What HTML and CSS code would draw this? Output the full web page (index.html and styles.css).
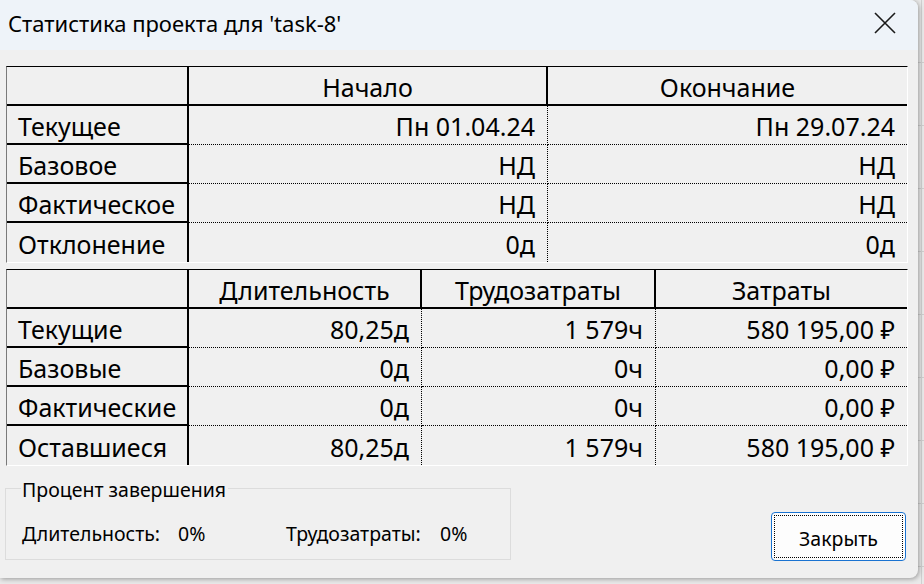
FILE: index.html
```html
<!DOCTYPE html>
<html lang="ru">
<head>
<meta charset="utf-8">
<title>Статистика проекта</title>
<link rel="stylesheet" href="styles.css">
</head>
<body>
<div class="desk">
  <div class="dialog">
    <div class="titlebar">
      <span class="title">Статистика проекта для 'task-8'</span>
      <span class="close">
        <svg width="22" height="22" viewBox="0 0 22 22"><path d="M1 1 L21 21 M21 1 L1 21" stroke="#1a1a1a" stroke-width="1.6" fill="none"/></svg>
      </span>
    </div>
    <div class="content">
      <div class="grid g1">
        <div class="cell lbl head"></div><div class="cell head">Начало</div><div class="cell head last">Окончание</div>
        <div class="cell lbl">Текущее</div><div class="cell">Пн 01.04.24</div><div class="cell last">Пн 29.07.24</div>
        <div class="cell lbl">Базовое</div><div class="cell">НД</div><div class="cell last">НД</div>
        <div class="cell lbl">Фактическое</div><div class="cell">НД</div><div class="cell last">НД</div>
        <div class="cell lbl end">Отклонение</div><div class="cell end">0д</div><div class="cell last end">0д</div>
      </div>
      <div class="grid g2">
        <div class="cell lbl head"></div><div class="cell head">Длительность</div><div class="cell head">Трудозатраты</div><div class="cell head last">Затраты</div>
        <div class="cell lbl">Текущие</div><div class="cell">80,25д</div><div class="cell">1 579ч</div><div class="cell last">580 195,00 ₽</div>
        <div class="cell lbl">Базовые</div><div class="cell">0д</div><div class="cell">0ч</div><div class="cell last">0,00 ₽</div>
        <div class="cell lbl">Фактические</div><div class="cell">0д</div><div class="cell">0ч</div><div class="cell last">0,00 ₽</div>
        <div class="cell lbl end">Оставшиеся</div><div class="cell end">80,25д</div><div class="cell end">1 579ч</div><div class="cell last end">580 195,00 ₽</div>
      </div>
      <div class="footer">
        <div class="group">
          <span class="legend">Процент завершения</span>
          <div class="stats">
            <span>Длительность:</span><span>0%</span>
            <span>Трудозатраты:</span><span>0%</span>
          </div>
        </div>
        <button class="btn"><span class="focus">Закрыть</span></button>
      </div>
    </div>
  </div>
</div>
</body>
</html>
```
FILE: styles.css
```css
html, body {
  margin: 0;
  padding: 0;
}
body {
  width: 924px;
  height: 584px;
  overflow: hidden;
  background: #e6e6e6;
  font-family: "Noto Sans", "Open Sans", "DejaVu Sans", sans-serif;
  color: #000;
}
.desk {
  width: 924px;
  height: 584px;
  background:
    linear-gradient(#d0d0d0, #d0d0d0) 921px 0 / 1px 584px no-repeat,
    repeating-linear-gradient(#e9e9e9 0 62px, #cfcfcf 62px 63px);
}
.dialog {
  width: 918px;
  height: 578px;
  background: #f0f0f0;
  border-radius: 0 8px 8px 0;
  box-shadow: 1px 1px 5px rgba(0,0,0,0.35);
  overflow: hidden;
  display: flex;
  flex-direction: column;
}
.titlebar {
  box-sizing: border-box;
  height: 50px;
  flex: none;
  background: #eef3f9;
  display: flex;
  align-items: center;
  justify-content: space-between;
  padding: 0 22px 4px 8px;
}
.title {
  font-size: 22px;
  letter-spacing: 0;
}
.close {
  display: flex;
  width: 22px;
  height: 22px;
}
.content {
  padding: 16px 0 0 6px;
  display: flex;
  flex-direction: column;
}
.grid {
  width: 902px;
  box-sizing: border-box;
  display: grid;
  grid-auto-rows: 39px;
  border-top: 1px solid #000;
  border-left: 1px solid #7a7a7a;
  border-right: 1px solid #ffffff;
  border-bottom: 1px solid #ffffff;
  font-size: 25px;
}
.g1 {
  grid-template-columns: 182px 359px 359px;
}
.g2 {
  margin-top: 6px;
  grid-template-columns: 182px 233px 234px 251px;
}
.cell {
  box-sizing: border-box;
  padding: 0 12px 0 0;
  white-space: nowrap;
  display: flex;
  align-items: center;
  justify-content: flex-end;
  border-bottom: 1px dotted #000;
  border-right: 1px dotted #000;
  padding-top: 2px;
}
.cell.head {
  justify-content: center;
  padding: 2px 0 0 0;
  border-bottom: 2px solid #000;
  border-right: 2px solid #000;
}
.cell.lbl {
  justify-content: flex-start;
  padding: 2px 0 0 11px;
  border-bottom: 2px solid #000;
  border-right: 2px solid #000;
}
.cell.last {
  border-right: none;
}
.cell.end {
  border-bottom: none;
}
.footer {
  display: flex;
  align-items: flex-start;
  margin-top: 22px;
}
.group {
  margin-left: -1px;
  width: 506px;
  height: 72px;
  box-sizing: border-box;
  border: 1px solid #dcdcdc;
  padding: 0 0 0 16px;
  font-size: 19.5px;
  display: flex;
  flex-direction: column;
  align-items: flex-start;
}
.legend {
  margin-top: -12px;
  line-height: 26px;
  background: #f0f0f0;
  padding: 0 2px 0 1px;
  margin-left: -1px;
}
.stats {
  display: grid;
  grid-template-columns: 156px 108px 154px auto;
  margin-top: 19px;
  line-height: 24px;
}
.btn {
  margin: 24px 0 0 260px;
  width: 135px;
  height: 49px;
  padding: 2px;
  background: #fdfdfd;
  border: 1px solid #1a73d1;
  border-radius: 4px;
  font-family: inherit;
  font-size: 19.5px;
  color: #000;
  box-sizing: border-box;
  display: flex;
}
.focus {
  flex: 1;
  border: 1px dotted #000;
  display: flex;
  align-items: center;
  justify-content: center;
  padding-top: 3px;
}
```
